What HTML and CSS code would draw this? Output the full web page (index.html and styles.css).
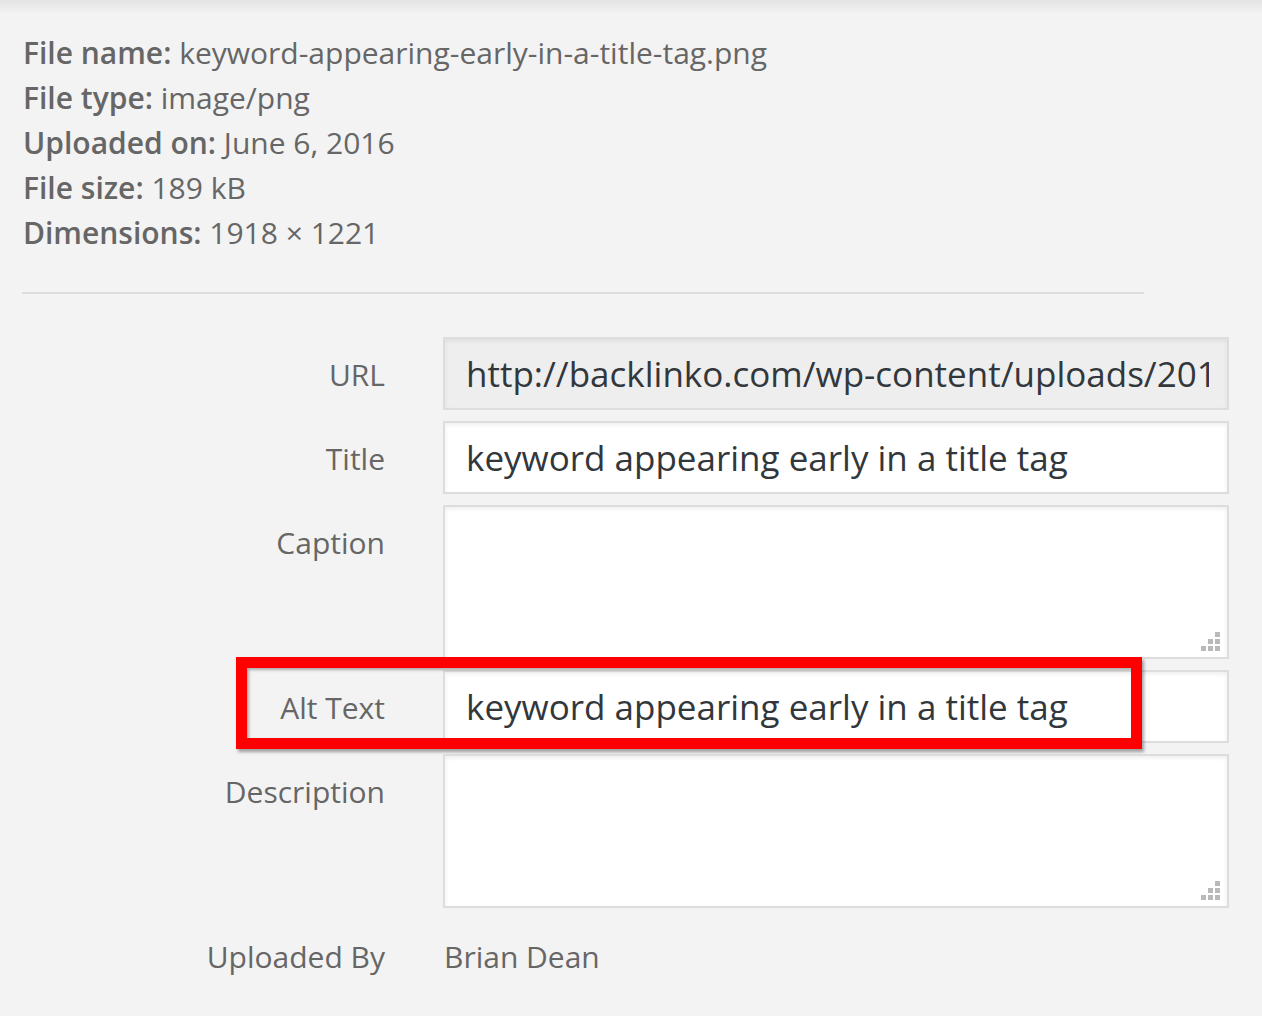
FILE: index.html
```html
<!DOCTYPE html>
<html>
<head>
<meta charset="utf-8">
<link rel="stylesheet" href="styles.css">
</head>
<body>
<div class="top-shade"></div>
<div class="details">
  <div class="meta">
    <div class="meta-line"><strong>File name:</strong> keyword-appearing-early-in-a-title-tag.png</div>
    <div class="meta-line"><strong>File type:</strong> image/png</div>
    <div class="meta-line"><strong>Uploaded on:</strong> June 6, 2016</div>
    <div class="meta-line"><strong>File size:</strong> 189 kB</div>
    <div class="meta-line"><strong>Dimensions:</strong> 1918 × 1221</div>
  </div>
  <div class="divider"></div>
  <div class="settings">
    <div class="setting">
      <div class="label">URL</div>
      <div class="field readonly"><span class="value">http://backlinko.com/wp-content/uploads/2016/06/keyword-appearing-early-in-a-title-tag.png</span></div>
    </div>
    <div class="setting">
      <div class="label">Title</div>
      <div class="field"><span class="value">keyword appearing early in a title tag</span></div>
    </div>
    <div class="setting">
      <div class="label">Caption</div>
      <div class="field area">
        <svg class="grip" width="20" height="20" viewBox="0 0 20 20"><rect x="14" y="0" width="5" height="5"/><rect x="7" y="7" width="5" height="5"/><rect x="14" y="7" width="5" height="5"/><rect x="0" y="14" width="5" height="5"/><rect x="7" y="14" width="5" height="5"/><rect x="14" y="14" width="5" height="5"/></svg>
      </div>
    </div>
    <div class="setting alt-row">
      <div class="label">Alt Text</div>
      <div class="field"><span class="value">keyword appearing early in a title tag</span></div>
      <div class="highlight"></div>
    </div>
    <div class="setting">
      <div class="label">Description</div>
      <div class="field area">
        <svg class="grip" width="20" height="20" viewBox="0 0 20 20"><rect x="14" y="0" width="5" height="5"/><rect x="7" y="7" width="5" height="5"/><rect x="14" y="7" width="5" height="5"/><rect x="0" y="14" width="5" height="5"/><rect x="7" y="14" width="5" height="5"/><rect x="14" y="14" width="5" height="5"/></svg>
      </div>
    </div>
    <div class="setting plain">
      <div class="label">Uploaded By</div>
      <div class="name">Brian Dean</div>
    </div>
  </div>
</div>
</body>
</html>
```
FILE: styles.css
```css
html, body {
  margin: 0;
  padding: 0;
}
body {
  background: #f3f3f3;
  font-family: "Open Sans", "Liberation Sans", sans-serif;
  color: #666;
  width: 1262px;
  height: 1016px;
  overflow: hidden;
  position: relative;
}
.top-shade {
  position: absolute;
  left: 0;
  top: 0;
  right: 0;
  height: 14px;
  background: linear-gradient(to bottom, #e4e4e4, rgba(243,243,243,0));
}
.details {
  padding-top: 30px;
}
.meta {
  padding-left: 23px;
  font-size: 30px;
  line-height: 45px;
}
.meta strong {
  font-weight: 600;
}
.divider {
  margin: 37px 0 0 22px;
  width: 1122px;
  height: 2px;
  background: #dddddd;
}
.settings {
  margin-top: 43px;
  display: flex;
  flex-direction: column;
  gap: 11px;
}
.setting {
  display: grid;
  grid-template-columns: 385px 786px;
  column-gap: 58px;
  align-items: start;
}
.alt-row {
  position: relative;
}
.label {
  text-align: right;
  font-size: 30px;
  line-height: 45px;
  padding-top: 15px;
}
.field {
  box-sizing: border-box;
  height: 73px;
  border: 2px solid #dddddd;
  background: #fff;
  box-shadow: inset 0 2px 4px rgba(0,0,0,0.07);
  padding: 0 18px 0 21px;
  font-size: 35px;
  line-height: 69px;
  color: #32373c;
  position: relative;
}
.field.readonly {
  background: #eeeeee;
}
.value {
  display: block;
  white-space: nowrap;
  overflow: hidden;
}
.field.area {
  height: 154px;
}
.grip {
  position: absolute;
  right: 6px;
  bottom: 5px;
  fill: #b9b9b9;
}
.plain {
  margin-top: 0;
}
.name {
  font-size: 30px;
  line-height: 45px;
  padding-top: 15px;
  padding-left: 1px;
}
.highlight {
  position: absolute;
  left: 236px;
  top: -13px;
  width: 906px;
  height: 92px;
  box-sizing: border-box;
  border: 11px solid #ff0000;
  box-shadow: 2px 3px 3px rgba(0,0,0,0.35), inset 2px 2px 3px rgba(0,0,0,0.3);
}
```
